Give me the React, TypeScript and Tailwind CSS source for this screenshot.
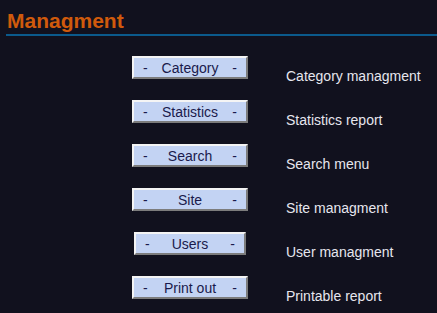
import React from 'react';

interface MenuItem {
    label: string;
    description: string;
    width: string;
}

const items: MenuItem[] = [
    { label: 'Category', description: 'Category managment', width: 'w-[116px]' },
    { label: 'Statistics', description: 'Statistics report', width: 'w-[116px]' },
    { label: 'Search', description: 'Search menu', width: 'w-[116px]' },
    { label: 'Site', description: 'Site managment', width: 'w-[116px]' },
    { label: 'Users', description: 'User managment', width: 'w-[112px]' },
    { label: 'Print out', description: 'Printable report', width: 'w-[116px]' },
];

const MenuButton: React.FC<{ item: MenuItem }> = ({ item }) => (
    <button
        type="button"
        className={`${item.width} h-[23px] flex items-center justify-between px-[9px] bg-[#c3d3f3] text-[#1a1a4c] text-[14px] leading-[16px]
            border-2 border-t-[#f4f4f4] border-l-[#f4f4f4] border-b-[#7c7c7c] border-r-[#7c7c7c]`}
    >
        <span>-</span>
        <span>{item.label}</span>
        <span>-</span>
    </button>
);

const App: React.FC = () => {
    return (
        <div className="w-[437px] h-[313px] bg-[#11111e] overflow-hidden font-['Liberation_Sans',Arial,sans-serif]">
            {/* Header */}
            <div className="pt-[9px] pl-[6px]">
                <h1 className="text-[21px] leading-[24px] font-bold text-[#d05a0c] pl-px">Managment</h1>
                <div className="h-[2px] bg-[#0b5a8c] mt-[1px]" />
            </div>

            {/* Menu rows */}
            <div className="pt-[20px] flex flex-col">
                {items.map((item) => (
                    <div key={item.label} className="h-[44px] flex items-start">
                        <div className="ml-[132px] w-[116px] flex justify-center">
                            <MenuButton item={item} />
                        </div>
                        <span className="ml-[38px] mt-[12px] text-[14px] leading-[16px] text-[#e6e6ee]">
                            {item.description}
                        </span>
                    </div>
                ))}
            </div>
        </div>
    );
};

export default App;
